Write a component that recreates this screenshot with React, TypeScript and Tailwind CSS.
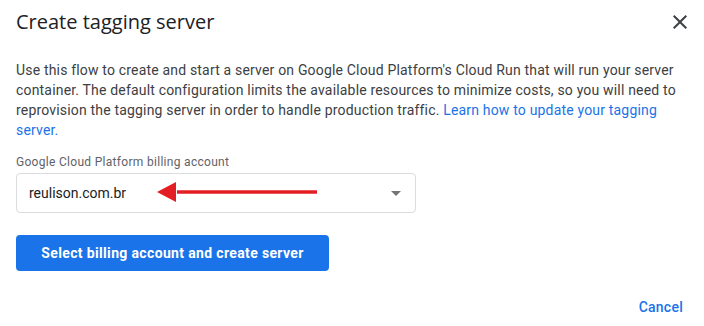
import React from "react";

export default function App() {
  return (
    <div className="w-[704px] h-[326px] bg-white relative overflow-hidden" style={{ fontFamily: "Roboto, 'Liberation Sans', sans-serif" }}>
      <div className="flex items-start justify-between pl-4 pr-3 pt-[8px]">
        <h1 className="text-[20px] leading-[28px] text-[#202124] font-normal" style={{ fontFamily: "'Open Sans', Roboto, sans-serif" }}>
          Create tagging server
        </h1>
        <button className="w-6 h-6 mt-[2px] flex items-center justify-center">
          <svg width="24" height="24" viewBox="0 0 24 24" fill="#3c4043">
            <path d="M19 6.41L17.59 5 12 10.59 6.41 5 5 6.41 10.59 12 5 17.59 6.41 19 12 13.41 17.59 19 19 17.59 13.41 12z" />
          </svg>
        </button>
      </div>
      <p className="px-4 mt-[24px] text-[14px] leading-[20px] tracking-[0.18px] text-[#3c4043]">
        Use this flow to create and start a server on Google Cloud Platform's Cloud Run that will run your server container. The default configuration limits the available resources to minimize costs, so you will need to reprovision the tagging server in order to handle production traffic.{" "}
        <a className="text-[#1a73e8]">Learn how to update your tagging server.</a>
      </p>
      <div className="px-4 mt-[14px]">
        <div className="text-[12px] leading-[16px] tracking-[0.3px] text-[#5f6368]">Google Cloud Platform billing account</div>
        <div className="relative mt-[3px] w-[400px] h-[40px] border border-[#dadce0] rounded-[4px] flex items-center justify-between pl-3 pr-[14px]">
          <span className="text-[14px] text-[#202124]">reulison.com.br</span>
          <svg width="10" height="5" viewBox="0 0 10 5">
            <path d="M0 0 L10 0 L5 5 Z" fill="#757575" />
          </svg>
          <svg className="absolute left-[139px] top-[7px]" width="162" height="22" viewBox="0 0 162 22">
            <path d="M21 9.2 L161 9.2 L161 12.8 L21 12.8 Z" fill="#e31e24" />
            <path d="M1 11 L20 1 L20 21 Z" fill="#e31e24" />
          </svg>
        </div>
        <button className="mt-[22px] w-[313px] h-[36px] rounded-[4px] bg-[#1a73e8] text-white text-[14px] font-bold tracking-[0.35px] flex items-center justify-center">
          Select billing account and create server
        </button>
      </div>
      <div className="flex justify-end pr-[21px] mt-[26px]">
        <button className="text-[14px] leading-[20px] font-medium tracking-[0.25px] text-[#1a73e8]">Cancel</button>
      </div>
    </div>
  );
}
